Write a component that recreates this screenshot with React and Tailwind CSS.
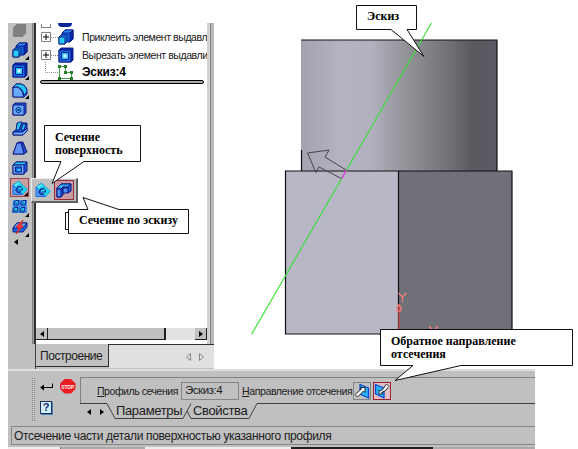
import React from "react";

const DARK = "#08107a";
const BLUE = "#1769e8";
const CYAN = "#27c8f5";

/* Toolbar glyphs share a 16x16 grid. */
function Glyph({ kind, size = 16 }) {
  const shapes = {
    gray: <path d="M1 5 5 1H15V11L11 15H1Z" fill="#808080" />,
    boss: (
      <g stroke={DARK} strokeWidth=".9" strokeLinejoin="round">
        <path d="M4 4 7 1H15V10L12 13H4Z" fill={BLUE} />
        <path d="M12 4 15 1V10L12 13Z" fill="#0b30b8" />
        <path d="M4 4 7 1H15L12 4Z" fill="#2b8df0" />
        <path d="M1 8 3 6H9V12L7 15H1Z" fill="#168be8" />
        <path d="M1 8H7V15H1Z" fill={CYAN} />
      </g>
    ),
    cut: (
      <g stroke={DARK} strokeWidth=".9" strokeLinejoin="round">
        <path d="M1 3 3 1H15V13L13 15H1Z" fill="#0b30b8" />
        <path d="M1 3H13V15H1Z" fill={BLUE} />
        <path d="M3.5 5.5H10.5V12.5H3.5Z" fill={CYAN} />
        <path d="M5.5 7.5H8.5V10.5H5.5Z" fill="#e4ffff" stroke="none" />
      </g>
    ),
    fillet: (
      <g stroke={DARK} strokeWidth=".9" strokeLinejoin="round">
        <path d="M1 5 4 2H9Q15 4 15 10V12L12 15H1Z" fill="#2455d9" />
        <path d="M1 5H6Q11 8 12 15H1Z" fill="#68a9fa" />
        <path d="M1 5 4 2H9Q15 4 15 10L12 13Q11 7 6 5Z" fill={CYAN} />
      </g>
    ),
    hole: (
      <g stroke={DARK} strokeWidth=".9" strokeLinejoin="round">
        <path d="M1 4 3 2H14V12L12 14H1Z" fill="#2455d9" />
        <path d="M1 4H12V14H1Z" fill="#68a9fa" />
        <circle cx="6.5" cy="9" r="2.6" fill={CYAN} />
        <path d="M5.5 8H7.5V10H5.5Z" fill={DARK} stroke="none" />
      </g>
    ),
    rib: (
      <g stroke={DARK} strokeWidth=".9" strokeLinejoin="round">
        <path d="M1 11 5 8V2H15V10L11 14H1Z" fill="#2455d9" />
        <path d="M1 11H11L15 7V10L11 14H1Z" fill="#68a9fa" />
        <path d="M5 3 7 1H10L7 9H4ZM11 3H14L12 9H9Z" fill={CYAN} />
      </g>
    ),
    draft: (
      <g stroke={DARK} strokeWidth=".9" strokeLinejoin="round">
        <path d="M5 3 7 2H11L15 12 12 14H1Z" fill="#2448c8" />
        <path d="M5 3H9L12 14H1Z" fill="#5f93f5" />
      </g>
    ),
    shell: (
      <g stroke={DARK} strokeWidth=".9" strokeLinejoin="round">
        <path d="M1 5 4 2H15V11L12 14H1Z" fill="#2455d9" />
        <path d="M1 5 4 2H15L12 5Z" fill={CYAN} />
        <path d="M1 5H12V14H1Z" fill="#68a9fa" />
        <path d="M3.5 7H9.5V12H3.5Z" fill={BLUE} />
        <path d="M5.5 9H8.5V11H5.5Z" fill={CYAN} stroke="none" />
      </g>
    ),
    section: (
      <g strokeWidth="1" strokeLinejoin="round">
        <path d="M1 5 6.5 1 15.4 9.5 10.5 14.5Z" fill="#1fd8f0" stroke="#2f9fcc" />
        <path d="M1 5 10.5 14.5H1Z" fill="#4fa0f4" stroke={BLUE} />
        <path d="M9.5 6.5 6 7 4 10 6 12.5 9 12" fill="none" stroke="#10309c" strokeWidth="1.5" />
        <path d="M6.5 10H10.5L10 7.5" fill="none" stroke="#10309c" strokeWidth="1.2" />
        <path d="M3 5.5 6.5 3" stroke="#a8f8ff" />
      </g>
    ),
    sketchSection: (
      <g stroke={DARK} strokeWidth="1" strokeLinejoin="round">
        <path d="M1 6 5 2H15V9L12 11V5H7V13L5 15H1Z" fill={BLUE} />
        <path d="M1 6 5 2H15L12 5H7L5 7H1Z" fill="#38a8fa" />
        <path d="M1 7H5V15H1ZM7 6H12V11H7Z" fill="#4f8fff" />
      </g>
    ),
    array: (
      <g stroke={DARK} strokeWidth=".9" fill={CYAN}>
        <path d="M1 1H15V14H0Z" fill="#3f8ff0" stroke="none" />
        <path d="M2 3 4 1.5H7L6 6H2ZM9 3 11 1.5H14L13 6H9ZM1 10 3 8.5H6L5 13H1ZM8 10 10 8.5H13L12 13H8Z" />
        <path d="M4 3.5V5M11 3.5V5M3 10.5V12M10 10.5V12" />
      </g>
    ),
    axis: (
      <g stroke={DARK} strokeWidth=".9" strokeLinejoin="round">
        <path d="M1 9 5 4H15V8L11 13H1Z" fill={BLUE} />
        <path d="M1 9 5 4H15L11 9Z" fill="#68a9fa" />
        <path d="M4 15 7 9 4 8 11 1 9 6 11 7Z" fill="#f33b35" stroke="#dd2020" strokeWidth=".8" />
      </g>
    ),
  };
  return (
    <svg width={size} height={size} viewBox="0 0 16 16" className="block shrink-0">
      {shapes[kind]}
    </svg>
  );
}

const tools = [
  ["gray", false],
  ["boss", true],
  ["cut", true],
  ["fillet", true],
  ["hole", false],
  ["rib", false],
  ["draft", false],
  ["shell", false],
  ["section", true],
  ["array", true],
  ["axis", true],
];

function ToolColumn() {
  return (
    <div className="flex w-[24px] shrink-0 flex-col pl-[2px]">
      <div className="-mt-[2px] flex flex-col">
        {tools.map(([kind, more]) => (
          <div
            key={kind}
            className={
              "relative flex h-[19.6px] w-[19px] items-center justify-center " +
              (kind === "section" ? "border border-[#a04048] bg-[#c8a0a0]" : "")
            }
          >
            <Glyph kind={kind} size={kind === "gray" ? 15 : 16} />
            {more && (
              <svg className="absolute bottom-0 right-0" width="4" height="4">
                <path d="M4 0V4H0Z" fill="#000" />
              </svg>
            )}
          </div>
        ))}
      </div>
      <svg width="5" height="6" className="ml-[4px] mt-[2px]">
        <path d="M4 0V6L0 3Z" fill="#000" />
      </svg>
    </div>
  );
}

function Plus() {
  return (
    <svg width="10" height="10" className="block shrink-0">
      <path d="M.5.5H9.5V9.5H.5Z" fill="#fff" stroke="#808080" />
      <path d="M2 5H8M5 2V8" stroke="#000" />
    </svg>
  );
}

function TreeRow({ icon, label }) {
  return (
    <div className="flex h-[18px] items-center whitespace-nowrap">
      <Plus />
      <span className="w-[7px] shrink-0 border-t border-dotted border-[#909090]" />
      <Glyph kind={icon} />
      <span className="ml-[8px] text-[10.5px] leading-[18px] tracking-[-0.42px] text-[#202020]">{label}</span>
    </div>
  );
}

function TreePanel() {
  return (
    <div className="flex h-[346px] w-[182px] shrink-0 flex-col">
      <div className="flex h-[321px]">
        <div className="w-[4px] shrink-0 border-l border-r-2 border-[#808080] border-r-[#303030] bg-[#a0a0a0]" />
        <div className="flex w-[171px] flex-col overflow-hidden bg-white">
          <div className="ml-[5px] h-[57px] overflow-hidden">
            <div className="flex h-[5px] items-end">
              <div className="h-[4px] w-[10px] border border-t-0 border-[#808080]" />
              <div className="ml-[7px] h-[4px] w-[14px] self-start rounded-b-sm bg-[#08249c]" />
            </div>
            <TreeRow icon="boss" label="Приклеить элемент выдавл" />
            <TreeRow icon="cut" label="Вырезать элемент выдавли" />
            <div className="flex h-[16px] items-center">
              <div className="-mt-[10px] ml-[4px] h-[11px] w-[13px] border-b border-l border-dotted border-[#909090]" />
              <svg width="15" height="15" className="block">
                <path d="M1.5 1.5H7.5V7.5H13.5V13.5H1.5Z" fill="none" stroke="#43a047" />
                <path d="M0 0H3V3H0ZM6 0H9V3H6ZM6 6H9V9H6ZM12 6H15V9H12ZM0 12H3V15H0ZM12 12H15V15H12Z" fill="#277c2c" />
              </svg>
              <span className="ml-[9px] text-[12px] font-bold leading-4 tracking-[-0.2px]">Эскиз:4</span>
            </div>
          </div>
          <div className="ml-[4px] h-[4px] w-[164px] rounded-full border border-black bg-[#aaa]" />
          <div className="flex-1" />
          <div className="mb-[4px] flex h-[12px] bg-[#e2e2e2]">
            <div className="flex w-[12px] items-center justify-center border-b border-r border-[#202020] bg-[#c0c0c0]">
              <svg width="4" height="6"><path d="M4 0V6L0 3Z" /></svg>
            </div>
            <div className="w-[118px] border-b border-r-2 border-[#202020] bg-[#c0c0c0]" />
            <div className="flex-1" />
            <div className="flex w-[12px] items-center justify-center border-b border-r border-[#202020] bg-[#c0c0c0]">
              <svg width="4" height="6"><path d="M0 0V6L4 3Z" /></svg>
            </div>
          </div>
        </div>
        <div className="flex w-[7px]">
          <div className="w-[3px] bg-[#d2d2d2]" />
          <div className="w-px bg-[#858585]" />
          <div className="w-[3px] bg-[#bcbcbc]" />
        </div>
      </div>
      <div className="flex h-[25px]">
        <div className="w-[4px] border-r border-[#404040] bg-[#c0c0c0]" />
        <div className="h-[23px] w-[73px] border-b border-r border-[#303030] bg-[#c2c2c2] pl-[4px] text-[12px] leading-[25px] tracking-[-0.45px] text-[#202020]">
          Построение
        </div>
        <div className="flex h-[24px] flex-1 items-center border-t border-[#303030] bg-[#e0e0e0] pl-[76px]">
          <svg width="20" height="10" fill="none" stroke="#888">
            <path d="M5.5 1.5V8.5L1.5 5ZM14.5 1.5V8.5L18.5 5Z" />
          </svg>
        </div>
      </div>
    </div>
  );
}

function Model() {
  return (
    <svg width="321" height="346" viewBox="214 23 321 346" className="block shrink-0 bg-white">
      <defs>
        <linearGradient id="cylinder">
          <stop offset="0" stopColor="#a3a3af" />
          <stop offset=".2" stopColor="#b3b3c1" />
          <stop offset=".36" stopColor="#b1b1bf" />
          <stop offset=".5" stopColor="#98989f" />
          <stop offset=".72" stopColor="#77777d" />
          <stop offset=".88" stopColor="#58585f" />
          <stop offset="1" stopColor="#5b5b63" />
        </linearGradient>
      </defs>
      <rect x="301" y="40" width="196" height="131" fill="url(#cylinder)" />
      <path d="M301 40H497V171M301.5 150V171" fill="none" stroke="#101014" strokeWidth="1.2" />
      <rect x="285" y="171" width="113" height="163" fill="#b7b7c5" />
      <rect x="398" y="171" width="114" height="163" fill="#6f7078" />
      <path d="M285.5 171H512V334H285.5ZM398.5 171V334" fill="none" stroke="#101014" strokeWidth="1.2" />
      <path d="M431.5 23 251.5 334.5" stroke="#35df35" strokeWidth="1.1" />
      <path d="M346 170 325 157 329 150 307.5 153 316 172.5 319 167 341.5 178.5" fill="none" stroke="#46464c" />
      <path d="M346.3 170 342 178.5" stroke="#f030e8" strokeWidth="1.4" />
      <g stroke="#ff7f80" fill="none" strokeWidth="1.2">
        <path d="M398.5 293 402.5 297 406.5 293M402.5 297V302M429 326 433.5 331 438 326" />
        <path d="M399 304V334" stroke="#df5158" />
        <path d="M397 311V307L399 305 401 307V311Z" />
      </g>
    </svg>
  );
}

function DirectionIcon({ reverse }) {
  return (
    <svg width="16" height="16" viewBox="0 0 16 16" className="block">
      {reverse ? (
        <g strokeLinejoin="round">
          <path d="M1.5 1.5 10 5V15L1.5 11Z" fill="#28b4fa" stroke="#1048d0" strokeWidth="1.3" />
          <path d="M5 7V11H8.5L7.5 9.5 11 8 15 3.5 12.5 1 9 6 6.5 8Z" fill="#fff" stroke="#181818" strokeWidth=".9" />
        </g>
      ) : (
        <g strokeLinejoin="round">
          <path d="M6 1.5 14.5 5V15L6 11Z" fill="#28b4fa" stroke="#1048d0" strokeWidth="1.3" />
          <path d="M11 4.5H6.5L7.5 6 1 11.5 3.5 14 9.5 8 11 9.5Z" fill="#fff" stroke="#181818" strokeWidth=".9" />
        </g>
      )}
    </svg>
  );
}

function PropertyPanel() {
  return (
    <div className="flex h-[55px] border-t-2 border-[#dedede] bg-[#c0c0c0]">
      <div className="ml-[24px] mt-[7px] h-[43px] w-[3px] border-x border-dotted border-[#888]" />
      <div className="ml-[5px] mt-[8px] grid h-[42px] w-[40px] grid-cols-2 items-start">
        <svg width="14" height="10" className="mt-[3px]">
          <path d="M0 5.5 4 2.5V5H12V1.5H13V6H4V8.5Z" />
        </svg>
        <svg width="16" height="15" viewBox="0 0 16 15">
          <path d="M4.5 0H11L15.5 4.5V10L11 14.5H4.5L0 10V4.5Z" fill="#ed1c24" />
          <text x="7.8" y="9.6" textAnchor="middle" fill="#fff" fontSize="5.5" fontWeight="bold" textLength="13" lengthAdjust="spacingAndGlyphs">STOP</text>
        </svg>
        <div className="-mt-px flex h-[13px] w-[12px] items-center justify-center border border-[#18305a] bg-[#d2efff] text-[11px] font-bold leading-none text-[#102878] shadow-[1px_1px_0_#4682b4]">
          ?
        </div>
      </div>
      <div className="mt-[6px] flex flex-1 flex-col">
        <div className="flex h-[27px] items-center whitespace-nowrap border-l border-t border-[#808080] pl-[16px] text-[10.5px] text-[#202020]">
          <span className="w-[84px] shrink-0 pt-[2px] tracking-[-0.45px]"><u>П</u>рофиль сечения</span>
          <span className="h-[18px] w-[58px] shrink-0 border border-[#858585] pl-[3px] text-[11.5px] leading-[15px] tracking-[-0.45px]">Эскиз:4</span>
          <span className="ml-[3px] w-[111px] shrink-0 pt-[2px] tracking-[-0.38px]"><u>Н</u>аправление отсечения</span>
          <span className="flex h-[18px] w-[18px] shrink-0 items-center justify-center border border-[#858585]"><DirectionIcon /></span>
          <span className="ml-[2px] flex h-[18px] w-[18px] shrink-0 items-center justify-center border border-[#a02030] bg-[#dfc0c4]"><DirectionIcon reverse /></span>
        </div>
        <div className="relative flex h-[17px] items-center text-[13px] leading-4 text-[#202020]">
          <svg width="455" height="17" className="absolute left-0 -top-px" fill="none" stroke="#404040">
            <path d="M0 .5H27L35 15.5H103L111 .5M107 8 111 15.5H169L177 .5H455" />
            <path d="M11 6V12L7 9ZM20 6V12L24 9Z" fill="#000" stroke="none" />
          </svg>
          <span className="relative -mt-[3px] ml-[36px] w-[77px] tracking-[-0.35px]">Параметры</span>
          <span className="relative -mt-[3px] tracking-[-0.35px]">Свойства</span>
        </div>
      </div>
    </div>
  );
}

function Callouts() {
  return (
    <div className="absolute inset-0 font-['Liberation_Serif',serif] text-[12px] font-bold leading-[13px] text-black">
      <svg width="578" height="449" className="absolute inset-0" fill="#fff" stroke="#111" strokeWidth="1">
        <path d="M65.5 212.5H70V229.5H65.5Z" />
        <path d="M356.5 5.5H416.5V29.5H407L424 56.5 391 29.5H356.5Z" />
        <path d="M44.5 125.5H140.5V161.5H84L52 183.5 61 161.5H44.5Z" />
        <path d="M68.5 209.5H88L83 197.5 119 209.5H188.5V233.5H68.5Z" />
        <path d="M380.5 329.5H572.5V365.5H461L395 380.5 413 365.5H380.5Z" />
      </svg>
      <div className="absolute left-[367px] top-[10px]">Эскиз</div>
      <div className="absolute left-[55px] top-[131px]">Сечение<br />поверхность</div>
      <div className="absolute left-[79px] top-[214px] whitespace-nowrap">Сечение по эскизу</div>
      <div className="absolute left-[391px] top-[335px] whitespace-nowrap">Обратное направление<br />отсечения</div>
    </div>
  );
}

export default function App() {
  return (
    <div className="relative h-[449px] w-[578px] overflow-hidden bg-white pl-2 pt-[23px] font-['Liberation_Sans',sans-serif]">
      <div className="flex h-[426px] w-[527px] flex-col overflow-hidden bg-[#c0c0c0]">
        <div className="flex h-[346px]">
          <ToolColumn />
          <TreePanel />
          <Model />
        </div>
        <PropertyPanel />
        <div className="ml-[3px] mt-[2px] h-[19px] border border-r-0 border-[#858585] pl-[2px] text-[12px] leading-[18px] tracking-[-0.35px] text-[#202020]">
          Отсечение части детали поверхностью указанного профиля
        </div>
        <div className="mt-[2px] flex h-[2px]">
          <div className="w-[52px] bg-[#eee]" />
          <div className="w-[85px] border-l border-[#777] bg-[#aaa]" />
          <div className="w-[146px] bg-[#eee]" />
          <div className="w-[142px] bg-[#202020]" />
          <div className="flex-1 bg-[#aaa]" />
        </div>
      </div>
      <div className="absolute left-[31px] top-[178px] flex h-[25px] w-[47px] items-center gap-[2px] border-b-2 border-l border-r-2 border-t border-b-[#606060] border-l-[#eee] border-r-[#606060] border-t-[#eee] bg-[#c0c0c0] pl-[3px]">
        <Glyph kind="section" />
        <div className="ml-px flex h-[20px] w-[20px] items-center justify-center border border-[#982838] bg-[#c79ba0]">
          <Glyph kind="sketchSection" />
        </div>
      </div>
      <Callouts />
    </div>
  );
}
